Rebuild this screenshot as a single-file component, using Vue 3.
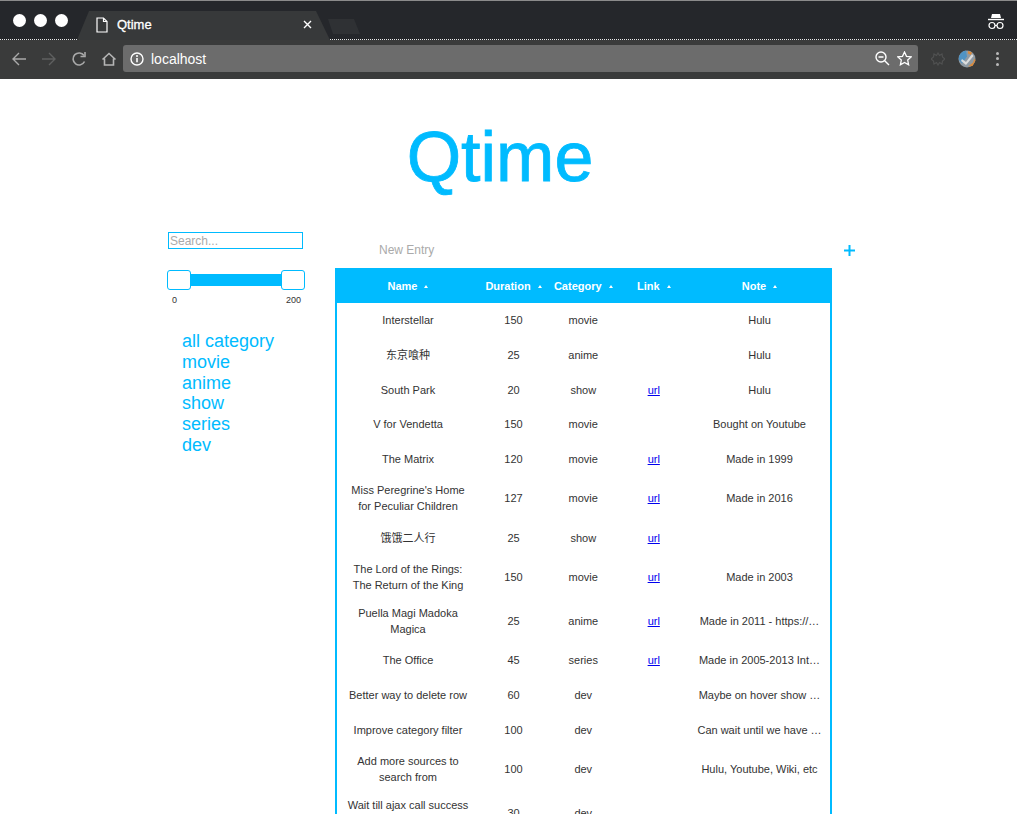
<template>
  <div class="window">
    <header class="chrome">
      <div class="tabstrip">
        <div class="lights"><i></i><i></i><i></i></div>
        <div class="tab">
          <svg class="doc" width="12" height="16" viewBox="0 0 12 16" fill="none" stroke="#fff" stroke-width="1.2">
            <path d="M1 1h6.500L11 4.500V15H1zM7.500 1v3.500H11" />
          </svg>
          <span class="tab-title">Qtime</span>
          <svg class="tab-close" width="9" height="9" viewBox="0 0 9 9" stroke="#fff" stroke-width="1.4">
            <path d="M1 1l7 7M8 1L1 8" />
          </svg>
        </div>
        <div class="newtab"></div>
        <svg class="incognito" width="18" height="17" viewBox="0 0 18 17" fill="none" stroke="#fff">
          <path d="M5 1h8l1 4H4z" fill="#fff" stroke="none" />
          <path d="M1 6.500h16" stroke-width="1.4" />
          <circle cx="5" cy="12.500" r="3" stroke-width="1.2" />
          <circle cx="13" cy="12.500" r="3" stroke-width="1.2" />
          <path d="M8 12.500h2" stroke-width="1.2" />
        </svg>
      </div>
      <div class="toolbar">
        <svg class="navicon" width="16" height="16" viewBox="0 0 16 16" fill="none" stroke="#a9a9a9" stroke-width="1.4">
          <path d="M15 8H2M8 2L2 8l6 6" />
        </svg>
        <svg class="navicon" width="16" height="16" viewBox="0 0 16 16" fill="none" stroke="#5f6060" stroke-width="1.4">
          <path d="M1 8h13M8 2l6 6-6 6" />
        </svg>
        <svg class="navicon" width="16" height="16" viewBox="0 0 16 16" fill="none" stroke="#a9a9a9" stroke-width="1.6">
          <path d="M13.500 10.500A6 6 0 1 1 13 4.500" />
          <path d="M14 1v4.500H9.500" />
        </svg>
        <svg class="navicon" width="16" height="16" viewBox="0 0 16 16" fill="none" stroke="#b5b5b5" stroke-width="1.6">
          <path d="M1.500 8.500L8 2.500l6.500 6M3.500 7.500v6.500h9V7.500" />
        </svg>
        <div class="omnibox">
          <svg width="14" height="14" viewBox="0 0 14 14" fill="none">
            <circle cx="7" cy="7" r="6" stroke="#fff" stroke-width="1.4" />
            <path d="M7 6v4.200" stroke="#fff" stroke-width="1.6" />
            <circle cx="7" cy="4" r="1" fill="#fff" />
          </svg>
          <span class="address">localhost</span>
          <svg class="om-zoom" width="15" height="15" viewBox="0 0 15 15" fill="none" stroke="#fff" stroke-width="1.400">
            <circle cx="6" cy="6" r="5" />
            <path d="M3.500 6h5M9.700 9.700L14 14" />
          </svg>
          <svg width="15" height="15" viewBox="0 0 15 15" fill="none" stroke="#fff" stroke-width="1.300">
            <path d="M7.500 1l2 4.300 4.700.6-3.500 3.200.9 4.700-4.100-2.300-4.100 2.300.9-4.700L.8 5.900l4.700-.6z" />
          </svg>
        </div>
        <svg class="ext" width="14" height="14" viewBox="0 0 14 14" fill="none" stroke="#505151" stroke-width="1.200">
          <path d="M7 1l1.500 2.500L11 2l.5 3L14 7l-2.500 2-.5 3-2.500-1.500L7 13l-1.500-2.500L3 12l-.5-3L0 7l2.500-2L3 2l2.500 1.500z" />
        </svg>
        <svg class="avatar" width="18" height="18" viewBox="0 0 18 18">
          <circle cx="9" cy="9" r="8.500" fill="#8f9aa3" />
          <path d="M1 10a8 8 0 0 1 7-9.500l1 6-5 7z" fill="#4f93c4" />
          <path d="M4 9l4 3 6-8 1.500 2L8 15 3 11z" fill="#dcdcdc" />
          <path d="M10 16.500l5-4 1.500-4 1 2-3 5.500z" fill="#d98a3d" />
          <path d="M10 1l4 1.500-1 2.500-3-1.500z" fill="#d98a3d" />
        </svg>
        <div class="menu"><i></i><i></i><i></i></div>
      </div>
    </header>

    <main class="page">
      <h1 class="title">Qtime</h1>
      <div class="columns">
        <aside class="side">
          <input class="search" placeholder="Search..." />
          <div class="slider">
            <div class="handle"></div>
            <div class="bar"></div>
            <div class="handle"></div>
          </div>
          <div class="range"><span>0</span><span>200</span></div>
          <ul class="cats">
            <li v-for="c in categories" :key="c">{{ c }}</li>
          </ul>
        </aside>
        <section class="content">
          <div class="entry">
            <span class="new-entry">New Entry</span>
            <svg width="11" height="11" viewBox="0 0 11 11" stroke="#00bbff" stroke-width="2">
              <path d="M5.500 0v11M0 5.500h11" />
            </svg>
          </div>
          <table class="list">
            <colgroup>
              <col class="col-name" /><col class="col-duration" /><col class="col-mid" /><col class="col-mid" /><col />
            </colgroup>
            <thead>
              <tr>
                <th v-for="h in headers" :key="h">{{ h }}<span class="caret"></span></th>
              </tr>
            </thead>
            <tbody>
              <tr v-for="r in rows" :key="r.name">
                <td>{{ r.name }}</td>
                <td>{{ r.duration }}</td>
                <td>{{ r.category }}</td>
                <td><a v-if="r.url" href="#">url</a></td>
                <td class="note">{{ r.note }}</td>
              </tr>
            </tbody>
          </table>
        </section>
      </div>
    </main>
  </div>
</template>

<script setup>
const categories = ["all category", "movie", "anime", "show", "series", "dev"];
const headers = ["Name", "Duration", "Category", "Link", "Note"];

const rows = [
  { name: "Interstellar", duration: 150, category: "movie", url: false, note: "Hulu" },
  { name: "东京喰种", duration: 25, category: "anime", url: false, note: "Hulu" },
  { name: "South Park", duration: 20, category: "show", url: true, note: "Hulu" },
  { name: "V for Vendetta", duration: 150, category: "movie", url: false, note: "Bought on Youtube" },
  { name: "The Matrix", duration: 120, category: "movie", url: true, note: "Made in 1999" },
  { name: "Miss Peregrine's Home for Peculiar Children", duration: 127, category: "movie", url: true, note: "Made in 2016" },
  { name: "饿饿二人行", duration: 25, category: "show", url: true, note: "" },
  { name: "The Lord of the Rings: The Return of the King", duration: 150, category: "movie", url: true, note: "Made in 2003" },
  { name: "Puella Magi Madoka Magica", duration: 25, category: "anime", url: true, note: "Made in 2011 - https://…" },
  { name: "The Office", duration: 45, category: "series", url: true, note: "Made in 2005-2013 Int…" },
  { name: "Better way to delete row", duration: 60, category: "dev", url: false, note: "Maybe on hover show …" },
  { name: "Improve category filter", duration: 100, category: "dev", url: false, note: "Can wait until we have …" },
  { name: "Add more sources to search from", duration: 100, category: "dev", url: false, note: "Hulu, Youtube, Wiki, etc" },
  { name: "Wait till ajax call success to add row", duration: 30, category: "dev", url: false, note: "" },
];
</script>

<style>
html,
body {
  margin: 0;
  height: 814px;
  overflow: hidden;
  background: #fff;
}
</style>

<style scoped>
.window {
  height: 814px;
  overflow: hidden;
  font-family: "Liberation Sans", Arial, "Noto Sans CJK SC", sans-serif;
}

/* browser frame */
.chrome {
  background: #3a3b3b;
}
.tabstrip {
  height: 40px;
  box-sizing: border-box;
  border-top: 1px solid #8b8b8b;
  border-bottom: 1px dotted #e8e8e8;
  background: #25272b;
  display: flex;
  align-items: flex-end;
  padding-left: 13px;
  padding-right: 12px;
}
.lights {
  display: flex;
  gap: 8px;
  align-self: flex-start;
  margin-top: 13px;
  width: 64px;
}
.lights i {
  width: 13px;
  height: 13px;
  border-radius: 50%;
  background: #fff;
}
.tab {
  width: 253px;
  height: 29px;
  margin-bottom: -1px;
  box-sizing: border-box;
  padding: 0 18px 2px 19px;
  background: #37393a;
  clip-path: polygon(0 100%, 12px 0, 239px 0, 100% 100%);
  display: flex;
  align-items: center;
  color: #fff;
}
.tab-title {
  margin-left: 9px;
  font-size: 13px;
  -webkit-text-stroke: 0.3px #fff;
  flex: 1;
}
.newtab {
  width: 32px;
  height: 15px;
  margin-left: -2px;
  margin-bottom: 5px;
  background: #2f3134;
  clip-path: polygon(5px 100%, 0 0, 26px 0, 100% 100%);
}
.incognito {
  margin-left: auto;
  align-self: flex-start;
  margin-top: 12px;
}
.toolbar {
  height: 39px;
  box-sizing: border-box;
  display: flex;
  align-items: center;
  padding: 0 18px 2px 11px;
  background: #3a3b3b;
}
.navicon {
  margin-right: 14px;
}
.navicon:nth-child(4) {
  margin-right: 6px;
}
.omnibox {
  width: 795px;
  height: 27px;
  box-sizing: border-box;
  padding: 0 6px 0 7px;
  border-radius: 3px;
  background: #6c6c6c;
  display: flex;
  align-items: center;
  flex: none;
}
.address {
  margin-left: 7px;
  color: #fff;
  font-size: 14px;
  flex: 1;
}
.om-zoom {
  margin-right: 7px;
}
.ext {
  margin-left: 13px;
}
.avatar {
  margin-left: 13px;
}
.menu {
  margin-left: auto;
  display: flex;
  flex-direction: column;
  gap: 2.500px;
}
.menu i {
  width: 3px;
  height: 3px;
  border-radius: 50%;
  background: #b9b9b9;
}

/* page */
.title {
  margin: 0;
  padding-top: 34px;
  padding-right: 17px;
  text-align: center;
  font-size: 70px;
  line-height: 88px;
  font-weight: 400;
  color: #00bbff;
  -webkit-text-stroke: 0.8px #00bbff;
}
.columns {
  display: flex;
  align-items: flex-start;
  margin-top: 31px;
  padding-left: 167px;
}
.side {
  width: 138px;
  flex: none;
}
.search {
  display: block;
  width: 135px;
  height: 17px;
  margin-left: 1px;
  box-sizing: border-box;
  padding: 0 1px;
  border: 1px solid #00bbff;
  border-radius: 0;
  outline: none;
  font-family: inherit;
  font-size: 12px;
}
.search::placeholder {
  color: #aaa;
}
.slider {
  display: flex;
  align-items: center;
  margin-top: 21px;
}
.handle {
  width: 24px;
  height: 20px;
  box-sizing: border-box;
  flex: none;
  border: 1px solid #00bbff;
  border-radius: 3px;
  background: #fff;
}
.bar {
  flex: 1;
  height: 12px;
  background: #00bbff;
}
.range {
  display: flex;
  justify-content: space-between;
  padding: 4px 4px 0 5px;
  font-size: 9px;
  line-height: 12px;
  color: #333;
}
.cats {
  list-style: none;
  margin: 25px 0 0 15px;
  padding: 0;
  font-size: 18px;
  line-height: 20.800px;
  color: #00bbff;
}
.content {
  margin-left: 30px;
  width: 520px;
  flex: none;
}
.entry {
  height: 36px;
  display: flex;
  align-items: center;
  justify-content: space-between;
  padding-left: 44px;
  box-sizing: border-box;
}
.new-entry {
  font-size: 12px;
  color: #aaa;
}
.list {
  width: 497px;
  table-layout: fixed;
  border-collapse: separate;
  border-spacing: 0;
  border: 2px solid #00bbff;
  border-top: 0;
  font-size: 11px;
  line-height: 16px;
  color: #333;
  text-align: center;
}
.col-name {
  width: 142px;
}
.col-duration {
  width: 69px;
}
.col-mid {
  width: 70.500px;
}
th {
  height: 35px;
  padding: 0;
  background: #00bbff;
  color: #fff;
  font-weight: 700;
  white-space: nowrap;
}
.caret {
  display: inline-block;
  margin-left: 7px;
  vertical-align: middle;
  border-left: 2.500px solid transparent;
  border-right: 2.500px solid transparent;
  border-bottom: 3px solid #fff;
}
td {
  height: 34.700px;
  box-sizing: border-box;
  padding: 6px 8px;
}
td a {
  color: #0000ee;
}
.note {
  white-space: nowrap;
  padding: 6px;
}
</style>
